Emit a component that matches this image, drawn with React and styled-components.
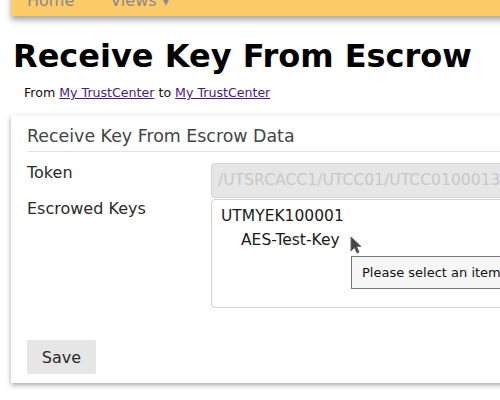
import React from "react";
import styled, { createGlobalStyle } from "styled-components";

const Global = createGlobalStyle`
  html, body { margin: 0; padding: 0; background: #fff; overflow: hidden; }
  body { font-family: "DejaVu Sans", sans-serif; color: #222; }
`;

const Page = styled.div`
  padding-left: 11px;
  width: 500px;
  height: 400px;
  box-sizing: border-box;
  overflow: hidden;
`;

const NavBar = styled.nav`
  display: flex;
  align-items: flex-end;
  gap: 36px;
  height: 40px;
  margin-top: -24px;
  padding: 0 16px 5px;
  box-sizing: border-box;
  background: #fecb69;
  box-shadow: 0 4px 6px rgba(0, 0, 0, 0.35);
  width: 540px;
`;

const NavItem = styled.span`
  font-family: "DejaVu Sans", sans-serif;
  font-size: 16px;
  color: #8a8a8a;
  line-height: 20px;
`;

const Title = styled.h1`
  margin: 20px 0 0 2px;
  font-family: "DejaVu Sans", sans-serif;
  font-weight: bold;
  font-size: 32px;
  line-height: 40px;
  color: #000;
  white-space: nowrap;
`;

const Sub = styled.div`
  margin: 9px 0 0 13px;
  font-family: "DejaVu Sans", sans-serif;
  font-size: 12.6px;
  color: #111;
  a { color: #4a1a8a; }
`;

const Card = styled.section`
  margin-top: 15px;
  width: 540px;
  background: #fff;
  box-shadow: 0 2px 5px rgba(0, 0, 0, 0.35);
  padding: 11px 16px 9px;
  box-sizing: border-box;
  position: relative;
`;

const CardTitle = styled.div`
  font-family: "DejaVu Sans", sans-serif;
  font-size: 17.4px;
  line-height: 20px;
  color: #444;
  padding-bottom: 5px;
  border-bottom: 1px solid #e4e4e4;
`;

const Row = styled.div`
  display: grid;
  grid-template-columns: 184px 1fr;
  align-items: start;
  margin-top: ${(p) => p.$mt || 0}px;
`;

const Label = styled.div`
  font-family: "DejaVu Sans", sans-serif;
  font-size: 16px;
  line-height: 20px;
  color: #2a2a2a;
`;

const Input = styled.div`
  height: 35px;
  box-sizing: border-box;
  border: 1px solid #d4d4d4;
  border-radius: 4px;
  background: #e6e6e6;
  color: #c8c8c8;
  font-family: "DejaVu Sans", sans-serif;
  font-size: 15.6px;
  padding: 7px 6px;
  white-space: nowrap;
  overflow: hidden;
`;

const Select = styled.div`
  height: 109px;
  box-sizing: border-box;
  border: 1px solid #d0d0d0;
  border-radius: 4px;
  padding: 4px 9px;
  font-family: "DejaVu Sans", sans-serif;
  font-size: 15.5px;
  color: #1a1a1a;
  line-height: 24px;
`;

const Option = styled.div`
  padding-left: ${(p) => (p.$indent ? 20 : 0)}px;
`;

const Button = styled.button`
  margin-top: 32px;
  width: 69px;
  height: 34px;
  border: none;
  border-radius: 2px;
  background: #e6e6e6;
  font-family: "DejaVu Sans", sans-serif;
  font-size: 16px;
  color: #2a2a2a;
  padding: 0;
`;

const Tooltip = styled.div`
  position: absolute;
  left: 340px;
  top: 141px;
  height: 33px;
  box-sizing: border-box;
  padding: 0 10px;
  display: flex;
  align-items: center;
  border: 1px solid #777;
  background: #f7f7f7;
  font-family: "DejaVu Sans", sans-serif;
  font-size: 13px;
  color: #111;
  white-space: nowrap;
`;

const Cursor = styled.svg`
  position: absolute;
  left: 339px;
  top: 121px;
`;

export default function App() {
  return (
    <>
      <Global />
      <Page>
        <NavBar>
          <NavItem>Home</NavItem>
          <NavItem>Views ▾</NavItem>
        </NavBar>
        <Title>Receive Key From Escrow</Title>
        <Sub>
          From <a href="#">My TrustCenter</a> to <a href="#">My TrustCenter</a>
        </Sub>
        <Card>
          <CardTitle>Receive Key From Escrow Data</CardTitle>
          <Row $mt={11}>
            <Label>Token</Label>
            <Input>/UTSRCACC1/UTCC01/UTCC0100013</Input>
          </Row>
          <Row $mt={1}>
            <Label>Escrowed Keys</Label>
            <Select>
              <Option>UTMYEK100001</Option>
              <Option $indent>AES-Test-Key</Option>
            </Select>
          </Row>
          <Button>Save</Button>
          <Cursor width="14" height="20" viewBox="0 0 14 20">
            <path d="M1 1 L1 15 L4.5 11.5 L7 17 L9 16 L6.5 10.5 L11 10.5 Z" fill="#444" stroke="#666" strokeWidth="1" />
          </Cursor>
          <Tooltip>Please select an item in the list.</Tooltip>
        </Card>
      </Page>
    </>
  );
}
